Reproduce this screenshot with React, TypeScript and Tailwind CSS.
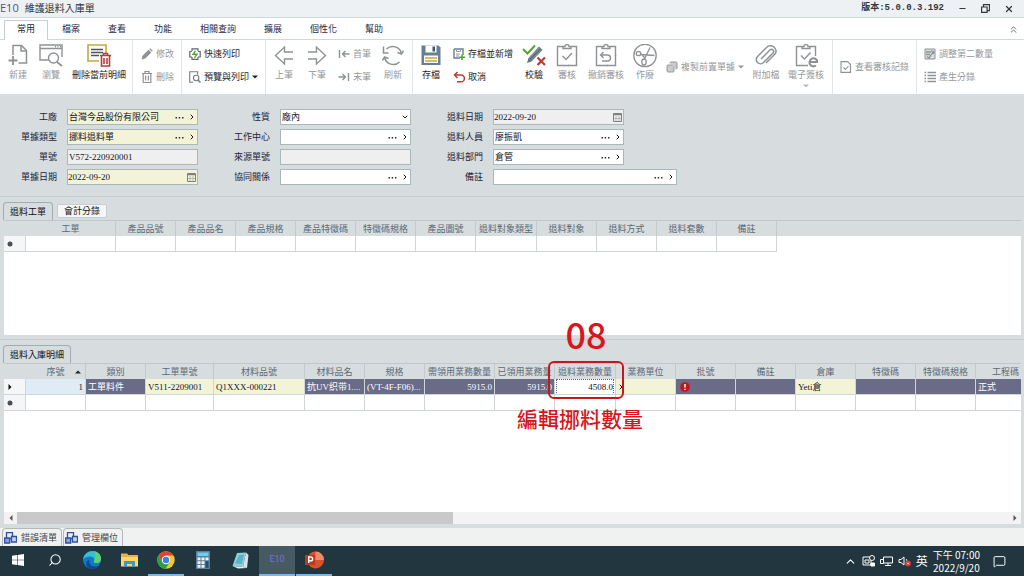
import React from 'react';
import { Search, Copy, Minus, X, ChevronsUp, ChevronUp, ChevronDown, ChevronRight, MessageSquare } from 'lucide-react';

type IconProps = { className?: string };

const GRAY = '#8f9294';

const NewIcon: React.FC = () => (
  <svg width="20" height="24" viewBox="0 0 20 24" fill="none" stroke={GRAY} strokeWidth="1.5">
    <path d="M5 11V1.5h8.5l5 5V19h-8" />
    <path d="M13 1.5V7h5.500" />
    <path d="M5 12v9M0.500 16.500h9" strokeWidth="1.800" />
  </svg>
);

const BrowseIcon: React.FC = () => (
  <svg width="24" height="24" viewBox="0 0 24 24" fill="none" stroke={GRAY} strokeWidth="1.4">
    <path d="M10 16H1V1h22v12M1 4.500h22" />
    <path d="M16 2.700h1M18.500 2.700h1M21 2.700h1" />
    <circle cx="14.500" cy="14" r="5" />
    <path d="M18 18l5 4" strokeWidth="1.800" />
  </svg>
);

const DeleteRowIcon: React.FC = () => (
  <svg width="24" height="24" viewBox="0 0 24 24" fill="none">
    <path d="M12 17H1V1h18v8" stroke="#c9a63c" strokeWidth="1.600" />
    <path d="M4 5.500h12M4 8.500h12M4 11.500h8" stroke="#4d5559" strokeWidth="1.400" />
    <path d="M13 11.500h11M16.500 11.500v-2h4v2M14.500 12v10h8V12M17 14v6M20 14v6" stroke="#b93a3a" strokeWidth="1.600" />
  </svg>
);

const PencilIcon: React.FC = () => (
  <svg width="12" height="12" viewBox="0 0 12 12" fill={GRAY}>
    <path d="M0.500 11.500l1-3.800 6-6 2.800 2.800-6 6zM8.200 1l1-0.700 2.500 2.500-0.700 1z" />
  </svg>
);

const TrashIcon: React.FC = () => (
  <svg width="12" height="12" viewBox="0 0 12 12" fill="none" stroke={GRAY} strokeWidth="1.200">
    <path d="M1 2.500h10M4 2.500v-2h4v2M2.200 2.500v9h7.600v-9M4.600 4.500v5M7.400 4.500v5" />
  </svg>
);

const QuickPrintIcon: React.FC = () => (
  <svg width="12" height="12" viewBox="0 0 12 12" fill="none" stroke="#5f686d" strokeWidth="1.200">
    <path d="M3 3V0.800h6V3M3 9H0.800V3.500h2M9 3.500h2.200V9H9M3 9v2.300h6V9" />
    <path d="M6.500 2.800L4 6.300h4L5.500 9.800" stroke="#4ea72e" strokeWidth="1.400" />
  </svg>
);

const PreviewIcon: React.FC = () => (
  <svg width="12" height="12" viewBox="0 0 12 12" fill="none" stroke="#777d80" strokeWidth="1.100">
    <path d="M4 11.300H0.700V0.700h8v3" />
    <circle cx="7.200" cy="7" r="2.700" />
    <path d="M9 9l2.500 2.500" strokeWidth="1.500" />
  </svg>
);

const ArrowIcon: React.FC<IconProps> = ({ className = '' }) => (
  <svg className={className} width="20" height="24" viewBox="0 0 20 24" fill="none" stroke={GRAY} strokeWidth="1.400">
    <path d="M19 8h-8.500V3L1.500 11.500l9 8.500v-5H19" />
  </svg>
);

const EdgeArrowIcon: React.FC<IconProps> = ({ className = '' }) => (
  <svg className={className} width="12" height="12" viewBox="0 0 12 12" fill="none" stroke={GRAY} strokeWidth="1.400">
    <path d="M1.500 2v8M11.500 6H4.500M7.500 3L4.500 6l3 3" />
  </svg>
);

const RefreshIcon: React.FC = () => (
  <svg width="22" height="24" viewBox="0 0 22 24" fill="none" stroke={GRAY} strokeWidth="1.500">
    <path d="M4.500 5A9 9 0 0 1 19.500 9.500M21.500 6.500l-2 3.500-4-1.500" />
    <path d="M17.500 18A9 9 0 0 1 2.500 13.500M0.500 16.500l2-3.500 4 1.500" />
    <path d="M1.500 2.500V9h5" />
  </svg>
);

const SaveIcon: React.FC = () => (
  <svg width="20" height="24" viewBox="0 0 20 24">
    <path d="M0.500 1.500h17l2 2V21h-19z" fill="#687f92" />
    <path d="M4.500 1.500h11v7h-11z" fill="#fff" />
    <path d="M11.500 2.500h2.500v5h-2.500z" fill="#3f5465" />
    <path d="M3 11.500h14V19H3z" fill="#fff" />
    <path d="M4 14h12M4 17h12" stroke="#c9a63c" strokeWidth="1.300" />
  </svg>
);

const SaveNewIcon: React.FC = () => (
  <svg width="12" height="12" viewBox="0 0 12 12" fill="none">
    <path d="M1 1h9v6M7 10H1V1" stroke="#687f92" strokeWidth="1.400" />
    <path d="M3.500 1v2.500h4V1M3 6h4M3 8h3" stroke="#8a9aa5" />
    <path d="M9 6.500V12M6.300 9.300H12" stroke="#4ea72e" strokeWidth="1.600" />
  </svg>
);

const UndoIcon: React.FC = () => (
  <svg width="12" height="12" viewBox="0 0 12 12" fill="none" stroke="#b93a3a" strokeWidth="1.500">
    <path d="M4.500 1L1.500 4l3 3M1.500 4H8a3.300 3.300 0 0 1 0 6.800H4" />
  </svg>
);

const VerifyIcon: React.FC = () => (
  <svg width="24" height="24" viewBox="0 0 24 24" fill="none">
    <path d="M5 19l1.500-5L17 2.500l3.500 3.500L9.500 17.500z" fill="#62717c" />
    <path d="M7 14.500L18 3.500M9 16.500L20 5.500" stroke="#9fabb3" strokeWidth="0.800" />
    <path d="M1 5l4.500 4.500L13 1.500" stroke="#55a532" strokeWidth="2" />
    <path d="M15.500 13.500l7.500 7.500M23 13.500L15.500 21" stroke="#bd3a3a" strokeWidth="2.200" />
  </svg>
);

const ClipboardIcon: React.FC<{ kind: 'check' | 'undo' | 'sign' }> = ({ kind }) => (
  <svg width="24" height="24" viewBox="0 0 24 24" fill="none" stroke={GRAY} strokeWidth="1.400">
    <path d="M8 2.500H2.500v19H14M16 2.500h5.500V12M8 4.500v-2h2a2 2 0 0 1 4 0h2v2z" />
    {kind !== 'sign' && <path d="M13 21.500h8.500V11" />}
    {kind === 'check' && <path d="M7.500 12l3.500 3.500 6-6.500" />}
    {kind === 'undo' && <path d="M9.500 8l-3 3 3 3M6.500 11h7a3 3 0 0 1 0 6H8" />}
    {kind === 'sign' && (
      <>
        <path d="M7 11.500l3.500 3.500 6-6.500" />
        <path d="M15.500 18h8a4 4 0 1 0-1.500 3.500" strokeWidth="2" />
      </>
    )}
  </svg>
);

const VoidIcon: React.FC = () => (
  <svg width="24" height="24" viewBox="0 0 24 24" fill="none" stroke={GRAY} strokeWidth="1.300">
    <circle cx="12" cy="11.500" r="11.200" />
    <circle cx="5.500" cy="9.500" r="2.200" />
    <ellipse cx="11" cy="18" rx="2.200" ry="3" />
    <path d="M7.500 10.500l14 1M11.500 15L17 3.500M8 10l4 4" />
  </svg>
);

const ClipIcon: React.FC = () => (
  <svg width="24" height="24" viewBox="0 0 24 24" fill="none" stroke={GRAY} strokeWidth="1.500">
    <path d="M7 15l9-9a2 2 0 0 1 3 3L9.500 18.500a4 4 0 0 1-6-6l9-9a5.500 5.500 0 0 1 9 1.500c1 2 .5 4-1 5.500L12 19" />
  </svg>
);

const DocCheckIcon: React.FC = () => (
  <svg width="12" height="12" viewBox="0 0 12 12" fill="none" stroke={GRAY} strokeWidth="1.100">
    <path d="M1 0.600h6.500l3 3v7.800H1zM3.500 6.500l2 2 3-3.500" />
  </svg>
);

const AdjustIcon: React.FC = () => (
  <svg width="12" height="12" viewBox="0 0 12 12" fill="none" stroke={GRAY}>
    <path d="M1 1h10v10H1z" fill="#dcdddd" />
    <path d="M2 4h5M2 6.500h4M3 8.500l2 1.500 4-6M7 2.500l3 1.500-1 2" strokeWidth="1.300" />
  </svg>
);

const ListIcon: React.FC = () => (
  <svg width="12" height="12" viewBox="0 0 12 12" stroke={GRAY} strokeWidth="1.300">
    <path d="M0.500 1.500H2M0.500 4.500H2M0.500 7.500H2M0.500 10.500H2M3.500 1.500H12M3.500 4.500H12M3.500 7.500H12M3.500 10.500H12" />
  </svg>
);

const Caret: React.FC<IconProps> = ({ className = '' }) => (
  <svg className={className} width="6" height="4" viewBox="0 0 6 4" fill="currentColor">
    <path d="M0 0.500h6L3 3.500z" />
  </svg>
);

const Dots: React.FC = () => (
  <svg width="9" height="3" viewBox="0 0 9 3" fill="#2c2c38">
    <path d="M0.500 1h1.500v1.500H0.500zM3.700 1h1.500v1.500H3.700zM7 1h1.500v1.500H7z" />
  </svg>
);

const CalendarIcon: React.FC = () => (
  <svg width="9" height="10" viewBox="0 0 9 10" fill="none" stroke="#7c8080">
    <path d="M0.500 1.500h8v8h-8z" />
    <path d="M1 2.500h7" strokeWidth="1.500" />
    <path d="M3 4v5M6 4v5M1 6.500h7" stroke="#b4b8b4" />
  </svg>
);

const WindowsStackIcon: React.FC = () => (
  <svg width="13" height="12" viewBox="0 0 13 12" fill="none" stroke="#2f4fa3" strokeWidth="1.300">
    <path d="M2.500 0.700h6v6h-6z" fill="#e7eefb" />
    <path d="M7.500 4.500h5v5.500h-5z" fill="#c6d4f0" />
    <path d="M0.700 6h5v5h-5z" fill="#86a4df" />
  </svg>
);

const BigButton: React.FC<{ label: string; icon: React.ReactNode; className?: string; active?: boolean; caret?: boolean }> = ({
  label,
  icon,
  className = 'w-[34px]',
  active,
  caret,
}) => (
  <button
    type="button"
    className={`flex shrink-0 flex-col items-center whitespace-nowrap pt-1 ${className} ${active ? 'text-[#1e1e28]' : 'text-[#95989a]'}`}
  >
    <span className="flex h-6 items-center">{icon}</span>
    <span className="mt-px">{label}</span>
    {caret && <Caret className="mt-[3px] text-[#b5b8ba]" />}
  </button>
);

const SmallButton: React.FC<{ label: string; icon: React.ReactNode; active?: boolean; caret?: boolean }> = ({
  label,
  icon,
  active,
  caret,
}) => (
  <button type="button" className={`flex items-center gap-[3px] whitespace-nowrap ${active ? 'text-[#1e1e28]' : 'text-[#95989a]'}`}>
    {icon}
    <span>{label}</span>
    {caret && <Caret />}
  </button>
);

const Stack: React.FC<{ children: React.ReactNode; className?: string }> = ({ children, className = 'px-[7px]' }) => (
  <div className={`flex shrink-0 flex-col gap-[11px] pt-2 ${className}`}>{children}</div>
);

const Group: React.FC<{ children: React.ReactNode; className?: string }> = ({ children, className = '' }) => (
  <div className={`flex shrink-0 border-r border-[#e3e6e7] ${className}`}>{children}</div>
);

const Ribbon: React.FC = () => (
  <div className="flex h-[54px] shrink-0 overflow-hidden bg-white leading-3">
    <Group className="px-px">
      <BigButton label="新建" icon={<NewIcon />} />
      <BigButton label="瀏覽" icon={<BrowseIcon />} className="w-8" />
      <BigButton label="刪除當前明細" icon={<DeleteRowIcon />} className="w-16" active />
    </Group>
    <Group className="pl-px">
      <Stack>
        <SmallButton label="修改" icon={<PencilIcon />} />
        <SmallButton label="刪除" icon={<TrashIcon />} />
      </Stack>
    </Group>
    <Group>
      <Stack>
        <SmallButton label="快速列印" icon={<QuickPrintIcon />} active />
        <SmallButton label="預覽與列印" icon={<PreviewIcon />} active caret />
      </Stack>
    </Group>
    <Group className="pl-px pr-[2px]">
      <BigButton label="上筆" icon={<ArrowIcon />} />
      <BigButton label="下筆" icon={<ArrowIcon className="-scale-x-100" />} className="w-8" />
      <Stack className="px-[5px]">
        <SmallButton label="首筆" icon={<EdgeArrowIcon />} />
        <SmallButton label="末筆" icon={<EdgeArrowIcon className="-scale-x-100" />} />
      </Stack>
      <BigButton label="刷新" icon={<RefreshIcon />} />
    </Group>
    <Group className="pl-px pr-1">
      <BigButton label="存檔" icon={<SaveIcon />} active />
      <Stack className="px-[5px]">
        <SmallButton label="存檔並新增" icon={<SaveNewIcon />} active />
        <SmallButton label="取消" icon={<UndoIcon />} active />
      </Stack>
      <BigButton label="校驗" icon={<VerifyIcon />} className="w-8" active />
      <BigButton label="審核" icon={<ClipboardIcon kind="check" />} />
      <BigButton label="撤銷審核" icon={<ClipboardIcon kind="undo" />} className="w-11" />
      <BigButton label="作廢" icon={<VoidIcon />} />
      <div className="flex items-center px-1">
        <SmallButton label="複製前置單據" icon={<Copy size={12} strokeWidth={2} fill="#c9cbcc" className="-scale-x-100" />} caret />
      </div>
      <BigButton label="附加檔" icon={<ClipIcon />} className="w-9" />
      <BigButton label="電子簽核" icon={<ClipboardIcon kind="sign" />} className="w-11" caret />
    </Group>
    <Group className="items-center px-[7px]">
      <SmallButton label="查看審核記錄" icon={<DocCheckIcon />} />
    </Group>
    <Stack>
      <SmallButton label="調整第二數量" icon={<AdjustIcon />} />
      <SmallButton label="產生分錄" icon={<ListIcon />} />
    </Stack>
  </div>
);

type FieldProps = {
  id: string;
  label: string;
  value?: string;
  kind?: 'lookup' | 'date' | 'select' | 'plain';
  bg?: string;
  width?: string;
};

const Field: React.FC<FieldProps> = ({ id, label, value = '', kind = 'lookup', bg = 'bg-white', width = 'w-[131px]' }) => (
  <div className="flex items-center gap-[10px]">
    <label htmlFor={id} className="w-[57px] text-right text-[#23233c]">
      {label}
    </label>
    <div className={`flex h-4 items-center border border-[#a9b8ba] pr-px text-[#14141c] ${bg} ${width}`}>
      {kind === 'select' ? (
        <select id={id} defaultValue={value} className="min-w-0 flex-1 appearance-none bg-transparent px-px outline-none">
          <option>{value}</option>
        </select>
      ) : (
        <input
          id={id}
          defaultValue={value}
          className={`min-w-0 flex-1 bg-transparent font-['Liberation_Serif','Noto_Sans_CJK_TC',serif] outline-none ${kind === 'date' ? '' : 'px-px'}`}
        />
      )}
      {kind === 'lookup' && (
        <span className="flex items-center gap-1">
          <button type="button" aria-label={`選擇${label}`}>
            <Dots />
          </button>
          <button type="button" aria-label={`開啟${label}`}>
            <ChevronRight size={8} strokeWidth={3} />
          </button>
        </span>
      )}
      {kind === 'select' && <ChevronDown size={8} strokeWidth={3} />}
      {kind === 'date' && <CalendarIcon />}
    </div>
  </div>
);

const YELLOW = 'bg-[#f3f3d8]';
const READONLY = 'bg-[#efefef]';

const HeaderForm: React.FC = () => (
  <form className="flex shrink-0 gap-[15px] border-b border-[#c3cfd1] pb-[11px] pt-[15px] leading-3">
    <div className="flex flex-col gap-1">
      <Field id="plant" label="工廠" value="台灣今品股份有限公司" bg={YELLOW} />
      <Field id="docType" label="單據類型" value="挪料退料單" bg={YELLOW} />
      <Field id="docNo" label="單號" value="V572-220920001" kind="plain" bg={READONLY} />
      <Field id="docDate" label="單據日期" value="2022-09-20" kind="date" bg={YELLOW} />
    </div>
    <div className="flex flex-col gap-1">
      <Field id="nature" label="性質" value="廠內" kind="select" />
      <Field id="workCenter" label="工作中心" />
      <Field id="sourceNo" label="來源單號" kind="plain" bg={READONLY} />
      <Field id="relation" label="協同關係" />
    </div>
    <div className="flex flex-col gap-1">
      <Field id="returnDate" label="退料日期" value="2022-09-20" kind="date" bg={READONLY} />
      <Field id="returnBy" label="退料人員" value="廖振凱" />
      <Field id="returnDept" label="退料部門" value="倉管" />
      <Field id="remark" label="備註" width="w-[184px]" />
    </div>
  </form>
);

const orderColumns = [
  { name: '工單', width: 90 },
  { name: '產品品號', width: 60 },
  { name: '產品品名', width: 60 },
  { name: '產品規格', width: 60 },
  { name: '產品特徵碼', width: 60 },
  { name: '特徵碼規格', width: 60 },
  { name: '產品圖號', width: 60 },
  { name: '退料對象類型', width: 61 },
  { name: '退料對象', width: 60 },
  { name: '退料方式', width: 60 },
  { name: '退料套數', width: 60 },
  { name: '備註', width: 60 },
];

const SELECTED = 'bg-[#6a6b87] text-white';
const EDITABLE = 'bg-[#f3f3d8]';

const detailColumns = [
  { name: '序號', width: 60, value: '1', style: 'bg-[#dfebf5] text-right' },
  { name: '類別', width: 60, value: '工單料件', style: SELECTED },
  { name: '工單單號', width: 68, value: 'V511-2209001', style: EDITABLE },
  { name: '材料品號', width: 91, value: 'Q1XXX-000221', style: EDITABLE },
  { name: '材料品名', width: 60, value: '抗UV织带1....', style: SELECTED },
  { name: '規格', width: 60, value: '(VT-4F-F06)...', style: SELECTED },
  { name: '需領用業務數量', width: 70, value: '5915.0', style: `${SELECTED} text-right` },
  { name: '已領用業務量', width: 60, value: '5915.0', style: `${SELECTED} text-right` },
  { name: '退料業務數量', width: 61, value: '4508.0', style: 'bg-white text-right' },
  { name: '業務單位', width: 60, value: '', style: EDITABLE },
  { name: '批號', width: 60, value: '!', style: SELECTED },
  { name: '備註', width: 60, value: '', style: SELECTED },
  { name: '倉庫', width: 60, value: 'Yeti倉', style: EDITABLE },
  { name: '特徵碼', width: 60, value: '', style: SELECTED },
  { name: '特徵碼規格', width: 60, value: '', style: SELECTED },
  { name: '工程碼', width: 60, value: '正式', style: SELECTED },
];

const RowMark: React.FC<{ kind: 'new' | 'current' }> = ({ kind }) => (
  <td className="h-4 border-b border-r border-[#d0d6d8] bg-[#f5f6f7] p-0">
    <svg className="ml-[2px]" width="8" height="8" viewBox="0 0 8 8" fill="#4c4f52">
      {kind === 'new' ? <circle cx="4" cy="4" r="2.500" /> : <path d="M2.500 1v6L5.500 4z" fill="#111" />}
    </svg>
  </td>
);

const GridHead: React.FC<{ columns: { name: string; width: number }[]; sorted?: string; filler?: boolean }> = ({ columns, sorted, filler }) => (
  <>
    <colgroup>
      <col style={{ width: 22 }} />
      {columns.map((c) => (
        <col key={c.name} style={{ width: c.width }} />
      ))}
      {filler && <col />}
    </colgroup>
    <thead className="bg-[#d7dcde]">
      <tr>
        <th className="h-[15px] p-0" />
        {columns.map((c) => (
          <th key={c.name} className="relative h-[15px] whitespace-nowrap border-r border-[#c2cacd] p-0 text-center font-normal text-[#5b6a76]">
            {c.name}
            {sorted === c.name && <Caret className="absolute right-1 top-[6px] rotate-180 text-[#222]" />}
          </th>
        ))}
        {filler && <th className="p-0" />}
      </tr>
    </thead>
  </>
);

const OrderGrid: React.FC = () => (
  <div className="ml-1 mr-[3px] flex-1 overflow-hidden border-t border-[#bcc8ca] bg-white">
    <table className="w-full table-fixed border-separate border-spacing-0 leading-3">
      <GridHead columns={orderColumns} filler />
      <tbody>
        <tr>
          <RowMark kind="new" />
          {orderColumns.map((c) => (
            <td key={c.name} className="border-b border-r border-[#d0d6d8] p-0" />
          ))}
          <td className="p-0" />
        </tr>
      </tbody>
    </table>
  </div>
);

const DetailGrid: React.FC = () => (
  <div className="relative ml-1 mr-[3px] flex flex-1 flex-col border-t border-[#bcc8ca] bg-white">
    <div className="flex-1 overflow-hidden">
      <table className="w-[1032px] table-fixed border-separate border-spacing-0 leading-3">
        <GridHead columns={detailColumns} sorted="序號" />
        <tbody className="font-['Liberation_Serif','Noto_Sans_CJK_TC',serif] text-[#14141c]">
          <tr>
            <RowMark kind="current" />
            {detailColumns.map((c) => (
              <td key={c.name} className={`overflow-hidden whitespace-nowrap border-b border-r border-[#d0d6d8] px-[2px] py-0 ${c.style}`}>
                {c.name === '退料業務數量' ? (
                  <input
                    aria-label={c.name}
                    defaultValue={c.value}
                    className="block h-[14px] w-full text-right outline-1 outline-dotted outline-[#666]"
                  />
                ) : c.value === '!' ? (
                  <svg className="ml-[2px]" width="10" height="10" viewBox="0 0 10 10">
                    <circle cx="5" cy="5" r="4.800" fill="#c4161c" />
                    <path d="M5 2v3.500M5 6.700V8" stroke="#fff" strokeWidth="1.400" />
                  </svg>
                ) : c.name === '業務單位' ? (
                  <ChevronRight size={8} strokeWidth={3} className="-ml-px" />
                ) : (
                  c.value
                )}
              </td>
            ))}
          </tr>
          <tr>
            <RowMark kind="new" />
            {detailColumns.map((c) => (
              <td key={c.name} className="border-b border-r border-[#d0d6d8] p-0" />
            ))}
          </tr>
        </tbody>
      </table>
    </div>
    <div className="flex h-3 items-center bg-[#f3f3f3] text-[#555]">
      <button type="button" aria-label="向左捲動" className="flex w-[13px] justify-center">
        <Caret className="rotate-90" />
      </button>
      <div className="h-full flex-1">
        <div className="h-full w-[44%] bg-[#c9c9c9]" />
      </div>
      <button type="button" aria-label="向右捲動" className="flex w-[13px] justify-center">
        <Caret className="-rotate-90" />
      </button>
    </div>

    {/* step callout */}
    <div className="absolute left-[544px] top-[-3px] h-[38px] w-[76px] rounded-md border-2 border-[#c8161d]" />
    <div className="absolute left-[544px] top-[-51px] w-[76px] text-center text-[36px] font-medium leading-10 text-[#d8161d]">08</div>
    <div className="absolute left-[513px] top-[40px] whitespace-nowrap text-[21px] font-medium leading-7 text-[#d8161d]">編輯挪料數量</div>
  </div>
);

const PanelTab: React.FC<{ label: string; active?: boolean }> = ({ label, active }) => (
  <button
    type="button"
    className={
      active
        ? 'h-[18px] rounded-t-sm border border-b-0 border-[#9fadb1] px-[6px] text-[#111]'
        : 'mb-[2px] h-[14px] rounded-xs border border-[#c6ced1] bg-[#f4f6f7] px-[6px] text-[#111]'
    }
  >
    {label}
  </button>
);

const menuTabs = ['檔案', '查看', '功能', '相關查詢', '擴展', '個性化', '幫助'];

const TitleBar: React.FC = () => (
  <header className="flex h-[17px] shrink-0 items-center justify-between bg-[#eef1f3] pr-[10px] text-[#33363a]">
    <div className="flex items-center gap-[6px] pb-[2px]">
      <span className="font-['Open_Sans',sans-serif] text-[11px] leading-3 text-[#5a4a9c]">E10</span>
      <h1 className="text-[10px] leading-4">維護退料入庫單</h1>
    </div>
    <div className="flex items-center gap-[14px]">
      <span className="font-['Liberation_Mono','Noto_Sans_CJK_TC',monospace] font-bold">版本:5.0.0.3.192</span>
      <button type="button" aria-label="最小化">
        <Minus size={9} strokeWidth={3} />
      </button>
      <button type="button" aria-label="還原">
        <svg width="9" height="9" viewBox="0 0 9 9" fill="none" stroke="#33363a" strokeWidth="1.200">
          <path d="M0.600 3h5.500v5.400H0.600zM2.500 2.500V0.600h6v6H6.500" />
        </svg>
      </button>
      <button type="button" aria-label="關閉">
        <X size={10} strokeWidth={3} />
      </button>
    </div>
  </header>
);

const TaskItem: React.FC<{ label: string; children: React.ReactNode; open?: boolean; active?: boolean }> = ({ label, children, open, active }) => (
  <button
    type="button"
    aria-label={label}
    className={`flex h-full w-9 items-center justify-center border-b-2 ${open ? 'border-[#76b9ed]' : 'border-transparent'} ${active ? 'bg-[#465a64]' : ''}`}
  >
    {children}
  </button>
);

const Taskbar: React.FC = () => (
  <footer className="flex h-[30px] shrink-0 items-center justify-between bg-[#21363e] text-white">
    <div className="flex h-full gap-px">
      <TaskItem label="開始">
        <svg width="12" height="12" viewBox="0 0 12 12" fill="#fff">
          <path d="M0 1.700L5 1v4.700H0zM5.600 0.900L12 0v5.700H5.600zM0 6.300h5V11l-5-.7zM5.600 6.300H12V12l-6.400-.9z" />
        </svg>
      </TaskItem>
      <TaskItem label="搜尋">
        <Search size={14} strokeWidth={1.800} className="-scale-x-100" />
      </TaskItem>
      <TaskItem label="Edge">
        <svg width="18" height="18" viewBox="0 0 18 18">
          <circle cx="9" cy="9" r="9" fill="#1577c8" />
          <path d="M0 8.500C1 3 5 0 9.500 0 14.500 0 18 3.500 18 7.500c0 3-2 4.500-4.500 4.500-2 0-3-.8-2.500-1.800C12 8 10.500 5.500 7 5.500c-3.500 0-6 1.500-7 3z" fill="#35c1d0" />
          <path d="M11 .2C15 1 18 4 18 7.500c0 3-2 4.500-4.500 4.500-2 0-3-.8-2.500-1.800C13 7 13 3 11 .2z" fill="#5fd36a" />
          <path d="M6.500 8.500c-1.500 4 2 8.500 9 6.500-2.500 3-7 4-10.500 1.500C2 14 3 9.500 6.500 8.500z" fill="#0c4a9a" />
        </svg>
      </TaskItem>
      <TaskItem label="檔案總管">
        <svg width="17" height="14" viewBox="0 0 17 14">
          <path d="M0 0.500h6l1.500 1.500H17V13H0z" fill="#e9b23a" />
          <path d="M0 4h17v9.500H0z" fill="#f9d869" />
          <path d="M3 8h11v6h-3v-3H6v3H3z" fill="#4593c9" />
        </svg>
      </TaskItem>
      <TaskItem label="Chrome" open>
        <svg width="18" height="18" viewBox="0 0 18 18">
          <circle cx="9" cy="9" r="8.700" fill="#f7c52c" />
          <path d="M9 4.600h7.500A8.700 8.700 0 0 0 1.500 4.600L5.200 11z" fill="#de4435" />
          <path d="M1.500 4.600A8.700 8.700 0 0 0 8.700 17.700l4-6.700H5.200z" fill="#2aa04a" />
          <circle cx="9" cy="9" r="4.200" fill="#fff" />
          <circle cx="9" cy="9" r="3.200" fill="#3f7de8" />
        </svg>
      </TaskItem>
      <TaskItem label="小算盤">
        <svg width="14" height="18" viewBox="0 0 14 18">
          <path d="M0 0h14v18H0z" fill="#5f7f94" />
          <path d="M1.500 1.500h11v3.500h-11z" fill="#6bd0ee" />
          <path d="M1.500 6.500h3v2.800h-3zM5.500 6.500h3v2.800h-3zM9.500 6.500h3v2.800h-3zM1.500 10.200h3V13h-3zM5.500 10.200h3V13h-3zM1.500 14h3v2.800h-3zM5.500 14h3v2.800h-3z" fill="#eef3f6" />
          <path d="M9.500 10.200h3v6.600h-3z" fill="#1f4f7c" />
        </svg>
      </TaskItem>
      <TaskItem label="記事本">
        <svg width="17" height="17" viewBox="0 0 17 17">
          <path d="M5 1l9-.5L11 15l-10.500-1z" fill="#8fd0de" />
          <path d="M14 .5L16.500 3 15 16l-4-1z" fill="#d8e3e6" />
          <path d="M.5 14L11 15l4 1-9 .5z" fill="#e9eef0" />
          <path d="M7 3l5-.3L10 12l-7-.5z" fill="#5fb2c6" />
        </svg>
      </TaskItem>
      <TaskItem label="E10" open active>
        <span className="font-['Roboto',sans-serif] text-[9px] text-[#7c6fd0]">E10</span>
      </TaskItem>
      <TaskItem label="PowerPoint" open>
        <svg width="19" height="18" viewBox="0 0 19 18">
          <circle cx="10.500" cy="9" r="8.500" fill="#d9512c" />
          <path d="M10.500.5A8.500 8.500 0 0 1 19 9h-8.500z" fill="#f08a6a" />
          <path d="M0 4h10v10H0z" fill="#b93a1c" />
          <path d="M3.700 12V6h2a1.900 1.900 0 0 1 0 3.800h-2" fill="none" stroke="#fff" strokeWidth="1.400" />
        </svg>
      </TaskItem>
    </div>
    <div className="flex items-center gap-[5px] pr-[18px]">
      <ChevronUp size={13} strokeWidth={2} />
      <svg width="13" height="12" viewBox="0 0 13 12" fill="none" stroke="#fff">
        <path d="M1 2h8v8H1zM3 5h4v3H3z" />
        <circle cx="10" cy="3" r="2.500" fill="#21363e" />
        <path d="M9 8h3.500v3H9z" fill="#fff" />
      </svg>
      <svg width="13" height="12" viewBox="0 0 13 12" fill="none" stroke="#fff">
        <path d="M3.500 2h9v6h-9zM8 8v2.500M5 10.500h6M0.500 4.500h3v4h-3z" />
      </svg>
      <svg width="13" height="12" viewBox="0 0 13 12" fill="none" stroke="#fff">
        <path d="M1 4.500h2L6 2v8L3 7.500H1zM8 4c1 1 1 2 0 3" />
        <circle cx="10" cy="8.500" r="3" fill="#d13438" stroke="none" />
        <path d="M9 7.500l2 2M11 7.500l-2 2" strokeWidth="0.800" />
      </svg>
      <span className="text-[12px] leading-4">英</span>
      <div className="mr-1 flex flex-col items-center text-[10px] leading-[13px]">
        <span>下午 07:00</span>
        <span>2022/9/20</span>
      </div>
      <MessageSquare size={13} strokeWidth={1.800} className="ml-1" />
    </div>
  </footer>
);

export default function App() {
  return (
    <div className="flex min-h-screen flex-col overflow-hidden bg-[#d7dcde] font-['Noto_Sans_CJK_TC',sans-serif] text-[9px]">
      <TitleBar />
      <nav className="flex h-[23px] shrink-0 items-end border-b border-t border-[#cfd8da] bg-white pl-1 leading-3 text-[#2c2c44]">
        <button type="button" className="-mb-px h-[20px] border border-b-0 border-[#c3d0d2] bg-white px-3 pb-1 text-[#1e1e28]">
          常用
        </button>
        {menuTabs.map((tab) => (
          <button key={tab} type="button" className="h-[20px] px-[14px] pb-px">
            {tab}
          </button>
        ))}
        <ChevronsUp size={11} strokeWidth={2} className="mb-1 ml-auto mr-[5px] text-[#666]" />
      </nav>
      <Ribbon />
      <HeaderForm />
      <section className="flex h-[138px] shrink-0 flex-col">
        <div className="flex items-end gap-1 px-[3px] pt-[5px] leading-3">
          <PanelTab label="退料工單" active />
          <PanelTab label="會計分錄" />
        </div>
        <OrderGrid />
      </section>
      <section className="mt-[4px] flex flex-1 flex-col border-t border-[#c3cfd1]">
        <div className="flex items-end gap-1 px-[3px] pt-[5px] leading-3">
          <PanelTab label="退料入庫明細" active />
        </div>
        <DetailGrid />
      </section>
      <div className="mt-[4px] flex h-[18px] shrink-0 gap-px bg-[#f0f1f1] pl-[2px] leading-3 text-[#44474a]">
        {['錯誤清單', '管理欄位'].map((tab) => (
          <button key={tab} type="button" className="flex items-center gap-1 rounded-t-sm border border-b-0 border-[#b3b9bb] px-px pr-[4px]">
            <WindowsStackIcon />
            {tab}
          </button>
        ))}
      </div>
      <Taskbar />
    </div>
  );
}
